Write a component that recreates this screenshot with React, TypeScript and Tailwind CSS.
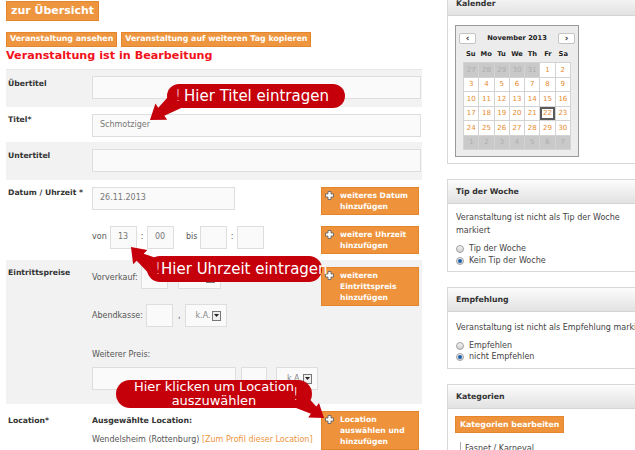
import React from "react";

const days = [
  ...[27, 28, 29, 30, 31].map((d) => ({ d, o: true })),
  ...Array.from({ length: 30 }, (_, i) => ({ d: i + 1, o: false })),
  ...Array.from({ length: 7 }, (_, i) => ({ d: i + 1, o: true })),
];

const Plus = () => (
  <svg width="9" height="9" viewBox="0 0 9 9" className="shrink-0 mt-[1px]">
    <path d="M3 0.5h3v2.5h2.5v3H6v2.5H3V6H0.5V3H3z" fill="#fff" stroke="#666" strokeWidth="0.9" />
  </svg>
);

function AddButton({ lines }: { lines: string[] }) {
  return (
    <div className="w-[98px] mr-[3px] shrink-0 flex gap-[6px] bg-[#ee933b] border border-[#e2852b] px-[3px] py-[2px] text-white font-bold text-[7.6px] leading-[11px] whitespace-nowrap">
      <Plus />
      <div>
        {lines.map((l) => (
          <div key={l}>{l}</div>
        ))}
      </div>
    </div>
  );
}

function Box({ className, value }: { className: string; value?: string }) {
  return (
    <div className={`h-[23px] border border-[#dedede] bg-[#fafafa] text-[8px] text-[#777] flex items-center px-[7px] shrink-0 ${className}`}>
      {value}
    </div>
  );
}

function Select({ className, value = "k.A." }: { className: string; value?: string }) {
  return (
    <div className={`h-[23px] border border-[#dedede] bg-[#fafafa] text-[8px] text-[#888] flex items-center justify-end gap-[1px] pr-[5px] shrink-0 ${className}`}>
      <span>{value}</span>
      <span className="w-[9px] h-[10px] border border-[#777] bg-[#eee] flex items-center justify-center">
        <svg width="5" height="3" viewBox="0 0 5 3">
          <path d="M0 0h5L2.5 3z" fill="#222" />
        </svg>
      </span>
    </div>
  );
}

function Label({ children, pt }: { children: React.ReactNode; pt: string }) {
  return <div className={`w-[86px] shrink-0 pl-[2px] font-bold text-[7.7px] leading-[12px] text-[#333] ${pt}`}>{children}</div>;
}

function Radio({ on }: { on?: boolean }) {
  return (
    <span className="w-[8px] h-[8px] rounded-full border border-[#a0a0a0] bg-linear-to-b from-[#f4f4f4] to-[#cfcfcf] flex items-center justify-center shrink-0">
      {on && <span className="w-[4px] h-[4px] rounded-full bg-[#1d5fae]" />}
    </span>
  );
}

function Panel({ title, children, className = "" }: { title: string; children: React.ReactNode; className?: string }) {
  return (
    <div className={`w-[210px] border border-[#d8d8d8] bg-white ${className}`}>
      <div className="h-[24px] bg-linear-to-b from-[#fcfcfc] to-[#e2e2e2] border-b border-[#d4d4d4] flex items-center pl-[8px] font-bold text-[7.8px] text-[#333]">
        {title}
      </div>
      {children}
    </div>
  );
}

export default function App() {
  return (
    <div className="relative w-[635px] h-[450px] overflow-hidden bg-white flex font-['DejaVu_Sans',Verdana,sans-serif] text-[#333]">
      {/* ── Left column ── */}
      <div className="w-[416px] ml-[6px] shrink-0 flex flex-col">
        <div className="mt-[1px] self-start h-[20px] px-[4px] flex items-center bg-[#ee963f] border border-[#e3862d] text-white font-bold text-[11px]">
          zur Übersicht
        </div>
        <div className="mt-[11px] flex gap-[4px]">
          <div className="h-[15px] px-[3px] flex items-center bg-[#ee963f] border border-[#e3862d] text-white font-bold text-[7.9px]">
            Veranstaltung ansehen
          </div>
          <div className="h-[15px] px-[3px] flex items-center bg-[#ee963f] border border-[#e3862d] text-white font-bold text-[7.9px]">
            Veranstaltung auf weiteren Tag kopieren
          </div>
        </div>
        <h1 className="mt-[1px] font-bold text-[11.2px] leading-[16px] text-[#f2121b]">Veranstaltung ist in Bearbeitung</h1>
        <div className="mt-[5px] border-t border-[#e8e8e8]" />

        {/* Übertitel */}
        <div className="h-[37px] bg-[#f2f2f2] flex">
          <Label pt="pt-[8px]">Übertitel</Label>
          <div className="flex-1 pt-[6px] pr-[1px]">
            <Box className="w-full" />
          </div>
        </div>
        {/* Titel */}
        <div className="h-[36px] flex">
          <Label pt="pt-[7px]">Titel*</Label>
          <div className="flex-1 pt-[7px] pr-[1px]">
            <Box className="w-full" value="Schmotziger" />
          </div>
        </div>
        {/* Untertitel */}
        <div className="h-[38px] bg-[#f2f2f2] flex">
          <Label pt="pt-[8px]">Untertitel</Label>
          <div className="flex-1 pt-[7px] pr-[1px]">
            <Box className="w-full" />
          </div>
        </div>
        {/* Datum */}
        <div className="h-[81px] flex">
          <Label pt="pt-[7px]">Datum / Uhrzeit *</Label>
          <div className="flex-1 pt-[7px] flex flex-col">
            <div className="flex justify-between items-start">
              <Box className="w-[143px] h-[22px]" value="26.11.2013" />
              <AddButton lines={["weiteres Datum", "hinzufügen"]} />
            </div>
            <div className="mt-[11px] flex justify-between items-start">
              <div className="flex items-center text-[8px] text-[#555]">
                <span className="w-[18px]">von</span>
                <Box className="w-[27px]" value="13" />
                <span className="w-[10px] text-center">:</span>
                <Box className="w-[27px]" value="00" />
                <span className="ml-[12px] w-[14px]">bis</span>
                <Box className="w-[27px]" />
                <span className="w-[10px] text-center">:</span>
                <Box className="w-[27px]" />
              </div>
              <AddButton lines={["weitere Uhrzeit", "hinzufügen"]} />
            </div>
          </div>
        </div>
        {/* Eintrittspreise */}
        <div className="h-[145px] bg-[#f2f2f2] flex">
          <Label pt="pt-[7px]">Eintrittspreise</Label>
          <div className="flex-1 flex justify-between items-start pt-[6px]">
            <div className="flex flex-col text-[8px] text-[#555]">
              <div className="flex items-center">
                <span className="mr-[3px]">Vorverkauf:</span>
                <Box className="w-[27px]" />
                <span className="ml-[5px] mr-[3px]">,</span>
                <Select className="w-[43px]" />
              </div>
              <div className="mt-[15px] flex items-center">
                <span className="mr-[3px]">Abendkasse:</span>
                <Box className="w-[27px]" />
                <span className="ml-[5px] mr-[4px]">,</span>
                <Select className="w-[42px]" />
              </div>
              <div className="mt-[22px] leading-[12px]">Weiterer Preis:</div>
              <div className="mt-[6px] flex items-center">
                <Box className="w-[144px]" />
                <Box className="ml-[5px] w-[26px]" />
                <Select className="ml-[9px] w-[42px]" />
              </div>
            </div>
            <div className="mt-[1px]">
              <AddButton lines={["weiteren", "Eintrittspreis", "hinzufügen"]} />
            </div>
          </div>
        </div>
        {/* Location */}
        <div className="flex-1 flex">
          <Label pt="pt-[11px]">Location*</Label>
          <div className="flex-1 flex justify-between items-start pt-[7px]">
            <div className="pt-[4px] text-[8px]">
              <div className="font-bold text-[7.8px] leading-[12px] text-[#333]">Ausgewählte Location:</div>
              <div className="mt-[7px] leading-[12px] text-[#555]">
                Wendelsheim (Rottenburg) <span className="text-[#ec9540]">[Zum Profil dieser Location]</span>
              </div>
            </div>
            <AddButton lines={["Location", "auswählen und", "hinzufügen"]} />
          </div>
        </div>
      </div>

      {/* ── Right column ── */}
      <div className="ml-[25px] mt-[-9px] shrink-0 flex flex-col">
        <Panel title="Kalender">
          <div className="pl-[7px] pt-[9px] pb-[6px]">
            <div className="w-[124px] border border-[#9a9a9a] bg-[#ececec] px-[7px] pt-[7px] pb-[6px]">
              <div className="flex items-center justify-between -mx-[4px]">
                <span className="w-[17px] h-[11px] bg-white border border-[#c4c4c4] rounded-[2px] flex items-center justify-center text-[9px] leading-none font-bold text-[#333]">‹</span>
                <span className="font-bold text-[6.7px] text-[#222]">November 2013</span>
                <span className="w-[17px] h-[11px] bg-white border border-[#c4c4c4] rounded-[2px] flex items-center justify-center text-[9px] leading-none font-bold text-[#333]">›</span>
              </div>
              <div className="mt-[5px] grid grid-cols-7 font-bold text-[6.7px] text-[#222] text-center leading-[10px]">
                {["Su", "Mo", "Tu", "We", "Th", "Fr", "Sa"].map((n) => (
                  <span key={n}>{n}</span>
                ))}
              </div>
              <div className="mt-[3px] grid grid-cols-7 gap-px bg-[#d3d3d3] border border-[#d3d3d3]">
                {days.map((x, i) => (
                  <div
                    key={i}
                    className={`h-[13.5px] flex items-center justify-center text-[7px] ${
                      x.o ? "bg-[#c9c9c9] text-[#adadad]" : "bg-white text-[#e68b2e]"
                    } ${!x.o && x.d === 22 ? "border-2 border-[#5a5a5a]" : ""}`}
                  >
                    {x.d}
                  </div>
                ))}
              </div>
            </div>
          </div>
        </Panel>

        <Panel title="Tip der Woche" className="mt-[15px]">
          <div className="pl-[8px] pt-[7px] pb-[4px] text-[8px] text-[#444]">
            <div className="leading-[13px]">
              Veranstaltung ist nicht als Tip der Woche
              <br />
              markiert
            </div>
            <div className="mt-[6px] flex items-center gap-[5px] leading-[12px]">
              <Radio /> Tip der Woche
            </div>
            <div className="flex items-center gap-[5px] leading-[12px]">
              <Radio on /> Kein Tip der Woche
            </div>
          </div>
        </Panel>

        <Panel title="Empfehlung" className="mt-[15px]">
          <div className="pl-[8px] pt-[9px] pb-[6px] text-[8px] text-[#444]">
            <div className="leading-[13px] whitespace-nowrap">Veranstaltung ist nicht als Empfehlung markiert</div>
            <div className="mt-[6px] flex items-center gap-[5px] leading-[11px]">
              <Radio /> Empfehlen
            </div>
            <div className="flex items-center gap-[5px] leading-[11px]">
              <Radio on /> nicht Empfehlen
            </div>
          </div>
        </Panel>

        <Panel title="Kategorien" className="mt-[15px]">
          <div className="pl-[7px] pt-[7px] pb-[8px] flex flex-col items-start">
            <div className="flex h-[17px] px-[4px] items-center bg-[#ee933b] border border-[#e5862c] text-white font-bold text-[7.8px]">
              Kategorien bearbeiten
            </div>
            <div className="mt-[9px] flex items-end text-[8px] leading-[10px] text-[#444] pl-[5px]">
              <span className="w-[5px] h-[9px] border-l border-b border-[#aaa] mb-[3px]" />
              <span>Fasnet / Karneval</span>
            </div>
          </div>
        </Panel>
      </div>

      {/* ── Hint callouts ── */}
      <svg className="absolute inset-0 pointer-events-none" width="635" height="450" viewBox="0 0 635 450">
        <path d="M150 120 L155.4 103.6 L158.3 107.7 L176 88 L190 104 L164.3 115.7 L167.2 119.8 Z" fill="#c5000b" />
        <path d="M131 247 L147.3 250.1 L143.7 253.7 L162 260 L156 281 L136.7 260.7 L133.1 264.3 Z" fill="#c5000b" />
        <path d="M324 418 L319 403 L316.3 406.6 L302 391 L291 406 L310.9 413.8 L308.2 417.4 Z" fill="#c5000b" />
      </svg>
      <div className="absolute left-[167px] top-[84px] w-[178px] h-[24px] rounded-[12px] bg-[#c5000b] text-white text-[15px] leading-[24px] pl-[8px] whitespace-nowrap">
        <span className="mr-[3px] font-light">!</span>Hier Titel eintragen
      </div>
      <div className="absolute left-[147px] top-[256px] w-[175px] h-[26px] rounded-[13px] bg-[#c5000b] text-white text-[15px] leading-[26px] pl-[8px] whitespace-nowrap">
        <span className="font-light">!</span>Hier Uhrzeit eintragen
      </div>
      <div className="absolute left-[116px] top-[380px] w-[196px] h-[28px] rounded-[14px] bg-[#c5000b] text-white text-[13px] leading-[14px] text-center whitespace-nowrap">
        <div>Hier klicken um Location</div>
        <div>auszuwählen</div>
        <span className="absolute right-[13px] top-[6px] text-[17px] leading-[17px] font-light">!</span>
      </div>
    </div>
  );
}
